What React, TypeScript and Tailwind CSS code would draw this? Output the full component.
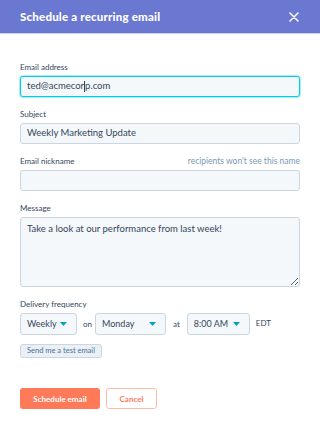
import React from 'react'

const font = { fontFamily: 'Lato, "Open Sans", sans-serif' }

function Label({ children, hint }: { children: React.ReactNode; hint?: string }) {
  return (
    <div className="flex items-center justify-between h-[12px] mb-[3px] text-[8px] leading-[12px] text-[#33475b]">
      <span>{children}</span>
      {hint && <span className="text-[8.5px] text-[#7c98b6]">{hint}</span>}
    </div>
  )
}

function Caret() {
  return (
    <svg width="7" height="4" viewBox="0 0 7 4" className="shrink-0">
      <path d="M0 0h7L3.5 4z" fill="#00a4bd" />
    </svg>
  )
}

function Select({ value, width }: { value: string; width: string }) {
  return (
    <div
      className={`flex items-center justify-between h-[22px] pl-[6px] pr-[9px] rounded-[3px] border border-[#cbd6e2] bg-[#f5f8fa] text-[9px] whitespace-nowrap text-[#33475b] ${width}`}
    >
      <span>{value}</span>
      <Caret />
    </div>
  )
}

export default function App() {
  return (
    <div className="w-[320px] h-[424px] bg-white" style={font}>
      <div className="flex items-center justify-between h-[34px] px-5 bg-[#6a78d1] border-b border-[#c9cfee]">
        <h1 className="text-[11.5px] font-black text-white tracking-[0.2px]">Schedule a recurring email</h1>
        <svg width="10" height="10" viewBox="0 0 10 10" className="mr-[1px]">
          <path d="M1 1l8 8M9 1l-8 8" stroke="white" strokeWidth="1.5" strokeLinecap="round" />
        </svg>
      </div>

      <div className="px-5 pt-[27px]">
        <Label>Email address</Label>
        <div className="flex items-center h-[21px] px-[6px] mb-[11px] rounded-[3px] border border-[#00d0e4] bg-[#f5f8fa] shadow-[0_0_0_1px_rgba(0,208,228,0.35)] text-[9.5px] text-[#33475b]">
          <span>ted@acmecor</span>
          <span className="w-px h-[11px] bg-[#33475b]" />
          <span>p.com</span>
        </div>

        <Label>Subject</Label>
        <div className="flex items-center h-[21px] px-[6px] mb-[11px] rounded-[3px] border border-[#cbd6e2] bg-[#f5f8fa] text-[9.5px] text-[#33475b]">
          Weekly Marketing Update
        </div>

        <Label hint="recipients won't see this name">Email nickname</Label>
        <div className="h-[21px] mb-[11px] rounded-[3px] border border-[#cbd6e2] bg-[#f5f8fa]" />

        <Label>Message</Label>
        <textarea
          readOnly
          defaultValue="Take a look at our performance from last week!"
          className="block w-full h-[70px] mb-[11px] px-[6px] py-[5px] rounded-[3px] border border-[#cbd6e2] bg-[#f5f8fa] text-[9.5px] leading-[12px] text-[#33475b] outline-none"
        />

        <Label>Delivery frequency</Label>
        <div className="flex items-center h-[22px] text-[8px] text-[#33475b]">
          <Select value="Weekly" width="w-[57px]" />
          <span className="ml-[6px] mr-[3px]">on</span>
          <Select value="Monday" width="w-[71px]" />
          <span className="ml-[7px] mr-[7px]">at</span>
          <Select value="8:00 AM" width="w-[63px]" />
          <span className="ml-[6px] -mt-[2px]">EDT</span>
        </div>

        <button className="mt-[6px] h-[14px] px-[6px] rounded-[3px] border border-[#cbd6e2] bg-[#eaf0f6] text-[7.5px] leading-none text-[#506e91]">
          Send me a test email
        </button>

        <div className="flex gap-[6px] mt-[29px]">
          <button className="h-[21px] w-[80px] rounded-[3px] bg-[#ff7a59] text-[8px] font-bold text-white">
            Schedule email
          </button>
          <button className="h-[21px] w-[51px] rounded-[3px] border border-[#ffbba8] bg-white text-[8px] font-bold text-[#ff7a59]">
            Cancel
          </button>
        </div>
      </div>
    </div>
  )
}
